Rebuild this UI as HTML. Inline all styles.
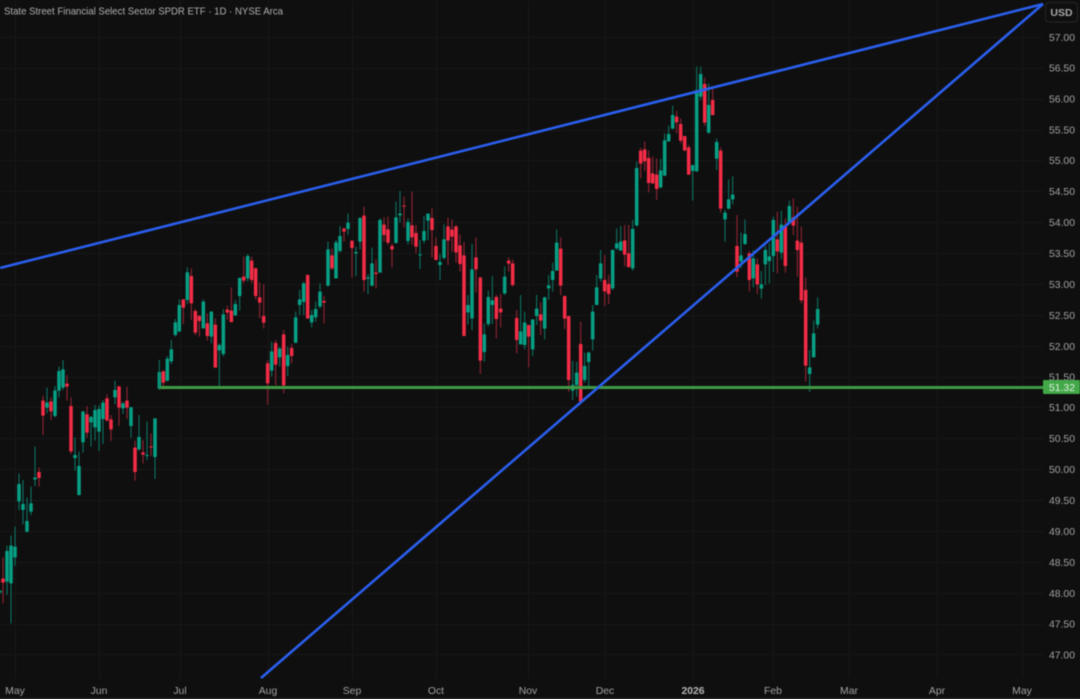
<!DOCTYPE html>
<html lang="en"><head><meta charset="utf-8"><title>Chart</title>
<style>
html,body{margin:0;padding:0;background:#0f0f0f;width:1080px;height:699px;overflow:hidden}
svg{display:block;filter:blur(.45px)}
text{font-family:"Liberation Sans",sans-serif;fill:#a2a2a2}
.w{fill:none;stroke-width:3.2}
.b{fill:none;stroke-width:10.5}
.rw{stroke:#962434}.gw{stroke:#0b7563}.r{stroke:#f42c46}.g{stroke:#07a085}
</style></head><body>
<svg width="1080" height="699" viewBox="0 0 1080 699" xmlns="http://www.w3.org/2000/svg">
<rect width="1080" height="699" fill="#0f0f0f"/>
<g stroke="#171717" stroke-width="1" fill="none">
<path d="M0 37.5H1043M0 68.5H1043M0 99.5H1043M0 130.5H1043M0 160.5H1043M0 191.5H1043M0 222.5H1043M0 253.5H1043M0 284.5H1043M0 315.5H1043M0 346.5H1043M0 377.5H1043M0 407.5H1043M0 438.5H1043M0 469.5H1043M0 500.5H1043M0 531.5H1043M0 562.5H1043M0 593.5H1043M0 624.5H1043M0 654.5H1043"/>
<path d="M15.5 0V678M99.5 0V678M180.5 0V678M268.5 0V678M352.5 0V678M436.5 0V678M528.5 0V678M605.5 0V678M693.5 0V678M773.5 0V678M849.5 0V678M937.5 0V678M1022.5 0V678"/>
</g>

<!-- zoom group 1 -->
<g transform="translate(0,340) scale(.33333)">
<path class="w gw" d="M0 750V762M21 617V765M33 587V850M45 560V678M57 400V510M69 420V553M81 472V578M93 440V525M105 320V438M141 143V220M165 138V232M177 80V172M189 60V150M225 292V392M237 335V466M249 212V338M273 228V320M285 195V302M297 195V333M309 180V312M345 122V193M369 185V222M393 200V293M417 225V332M441 245V360M465 235V417M478 60V150M502 48V125M514 0V72"/>
<path class="w rw" d="M9 652V790M117 382V440M129 167V285M153 172V240M201 105V182M213 172V342M261 198V293M321 163V245M333 225V303M357 138V258M381 140V237M405 302V422M429 300V371M453 280V348M490 90V148"/>
<path class="b g" d="M0 752V758M21 633V725M33 617V730M45 620V652M57 432V484M69 492V510M81 543V575M93 490V515M105 413V418M141 188V203M165 151V228M177 93V152M189 88V143M225 345V354M237 378V465M249 215V307M273 231V247M285 210V262M297 207V275M309 188V237M345 150V172M369 190V205M393 202V258M417 291V328M441 345V348M465 235V351M478 96V146M502 56V122M514 28V64"/>
<path class="b r" d="M9 716V728M117 396V414M129 182V227M153 184V214M201 131V140M213 198V334M261 223V278M321 175V241M333 238V268M357 139V203M381 182V203M405 323V396M429 337V344M453 319V322M490 94V128"/>
</g>

<!-- zoom group 2 -->
<g transform="translate(150,240) scale(.33333)">
<path class="w gw" d="M76 237V290M88 178V275M112 82V192M160 178V265M184 213V310M208 310V440M220 207V350M256 180V228M269 112V212M293 42V125M365 305V410M389 320V380M413 320V408M437 215V310M449 150V225M461 125V225M485 210V262M497 185V245M510 130V205M534 5V140"/>
<path class="w rw" d="M100 178V252M124 85V240M136 207V285M148 225V290M172 220V302M196 235V383M232 197V240M244 142V248M281 50V130M305 50V130M317 82V178M329 127V235M341 132V265M353 360V494M377 300V436M401 270V460M425 312V370M473 103V237M522 168V250"/>
<path class="b g" d="M76 247V285M88 195V275M112 97V180M160 185V265M184 215V290M208 315V331M220 223V342M256 192V226M269 114V168M293 48V115M365 334V392M389 326V352M413 345V378M437 232V308M449 178V195M461 130V186M485 225V247M497 207V232M510 155V200M534 28V137"/>
<path class="b r" d="M100 178V203M124 108V190M136 213V278M148 228V243M172 250V288M196 254V383M232 209V218M244 212V246M281 110V122M305 62V120M317 85V168M329 172V188M341 228V248M353 370V430M377 309V374M401 283V436M425 324V348M473 105V235M522 183V188"/>
</g>

<!-- zoom group 3 -->
<g transform="translate(320,180) scale(.33333)">
<path class="w gw" d="M48 180V295M60 138V218M84 100V165M108 200V288M120 113V208M144 282V342M156 203V320M180 115V278M228 65V190M240 33V128M264 115V193M300 180V267M312 108V190M324 100V180M360 222V300M372 133V238M444 345V433M456 192V450M493 430V545M505 332V440M517 288V432"/>
<path class="w rw" d="M36 205V270M72 143V185M96 182V292M132 80V335M168 238V325M192 112V185M204 110V195M216 190V262M252 50V142M276 35V195M288 135V220M336 85V232M348 172V240M384 113V255M396 118V215M408 135V247M420 163V275M432 186V468M468 172V338M481 290V582M529 345V475"/>
<path class="b g" d="M48 187V295M60 168V213M84 128V147M108 216V220M120 114V185M144 292V296M156 250V317M180 120V278M228 112V189M240 101V106M264 126V183M300 223V226M312 153V182M324 101V122M360 246V255M372 178V234M444 375V397M456 268V415M493 463V516M505 351V432M517 361V375"/>
<path class="b r" d="M36 226V265M72 146V155M96 182V204M132 107V300M168 278V282M192 134V165M204 148V188M216 198V208M252 77V80M276 136V172M288 159V200M336 114V150M348 198V240M384 139V182M396 149V170M408 139V217M420 196V252M432 226V468M468 232V268M481 293V542M529 351V417"/>
</g>

<!-- zoom group 4 -->
<g transform="translate(460,220) scale(.33333)">
<path class="w gw" d="M134 140V225M182 225V373M194 275V388M218 300V408M230 225V315M254 230V358M266 165V240M278 128V215M290 28V152M338 423V540M350 425V530M374 398V488M386 395V500M398 255V392M410 165V255M422 90V185M458 88V210M470 25V90M482 18V90M518 0V152"/>
<path class="w rw" d="M122 222V322M146 112V155M158 118V200M170 270V400M206 315V442M242 247V345M302 52V225M314 228V327M326 288V515M362 305V545M434 105V258M446 165V252M494 15V138M506 15V143"/>
<path class="b g" d="M134 170V220M182 334V373M194 308V375M218 298V388M230 266V288M254 232V326M266 196V205M278 153V180M290 68V152M338 495V512M350 458V495M374 438V480M386 398V426M398 275V358M410 202V255M422 130V176M458 90V205M470 70V85M482 65V92M518 27V145"/>
<path class="b r" d="M122 266V277M146 122V131M158 130V195M170 294V360M206 315V350M242 283V302M302 86V197M314 228V296M326 288V480M362 372V545M434 180V214M446 192V222M494 61V104M506 100V141"/>
</g>

<!-- zoom group 5 -->
<g transform="translate(620,60) scale(.33333)">
<path class="w gw" d="M50 305V500M122 297V385M134 220V348M146 197V245M158 137V208M218 315V422M230 20V335M242 20V120M266 70V222M290 236V330M326 358V448M338 348V433"/>
<path class="w rw" d="M62 263V355M74 245V333M86 272V397M98 290V372M110 295V420M170 153V220M182 175V250M194 228V275M206 255V345M254 53V198M278 85V167M302 262V458"/>
<path class="b g" d="M50 324V496M122 331V382M134 241V347M146 222V244M158 165V206M218 315V333M230 90V334M242 42V110M266 135V218M290 246V296M326 418V446M338 404V418"/>
<path class="b r" d="M62 272V311M74 268V304M86 294V369M98 340V370M110 344V387M170 170V187M182 192V242M194 228V271M206 262V344M254 72V188M278 120V165M302 272V446"/>
</g>

<!-- zoom group 6 -->
<g transform="translate(710,190) scale(.33333)">
<path class="w gw" d="M45 60V155M93 128V235M105 88V165M130 180V292M154 243V326M166 168V285M178 160V280M190 80V246M214 62V208M238 32V105M299 480V606M311 392V502M323 322V415"/>
<path class="w rw" d="M81 75V262M118 183V305M142 205V312M202 65V250M226 85V248M250 25V135M262 50V260M274 110V340M287 262V575"/>
<path class="b g" d="M45 68V88M93 196V214M105 132V162M130 205V265M154 283V296M166 180V223M178 199V213M190 90V198M214 104V188M238 48V100M299 532V552M311 430V502M323 357V404"/>
<path class="b r" d="M81 168V245M118 190V270M142 223V283M202 148V184M226 106V228M250 82V107M262 152V180M274 158V331M287 300V527"/>
</g>

<!-- drawings -->
<path d="M159 387.5H1043" stroke="#3f9a43" stroke-width="3" fill="none"/>
<path d="M159.5 372V388" stroke="#0a8a72" stroke-width="1.5" fill="none"/>
<path d="M0 268L1043 4" stroke="#2a5fef" stroke-width="2.6" fill="none"/>
<path d="M261 678L1043 4" stroke="#2a5fef" stroke-width="2.6" fill="none"/>

<!-- title -->
<text x="4" y="14.5" font-size="10.4" textLength="279" lengthAdjust="spacingAndGlyphs" style="fill:#b0b0b0">State Street Financial Select Sector SPDR ETF · 1D · NYSE Arca</text>

<!-- USD -->
<rect x="1045.5" y="2.5" width="32" height="19.5" rx="3.5" fill="#0f0f0f" stroke="#262626"/>
<text x="1061.5" y="16" font-size="10.5" font-weight="700" text-anchor="middle" style="fill:#a8a8a8">USD</text>

<!-- price axis -->
<g font-size="10.4" text-anchor="middle">
<text x="1062" y="41">57.00</text><text x="1062" y="71.5">56.50</text><text x="1062" y="102.5">56.00</text><text x="1062" y="133.5">55.50</text><text x="1062" y="164">55.00</text><text x="1062" y="195">54.50</text><text x="1062" y="226">54.00</text><text x="1062" y="257">53.50</text><text x="1062" y="288">53.00</text><text x="1062" y="319">52.50</text><text x="1062" y="350">52.00</text><text x="1062" y="380.5">51.50</text><text x="1062" y="411">51.00</text><text x="1062" y="442">50.50</text><text x="1062" y="473">50.00</text><text x="1062" y="504">49.50</text><text x="1062" y="535">49.00</text><text x="1062" y="566">48.50</text><text x="1062" y="597">48.00</text><text x="1062" y="627.5">47.50</text><text x="1062" y="658.5">47.00</text>
</g>
<rect x="1043" y="380" width="37" height="14" rx="1" fill="#43a848"/>
<text x="1062" y="391" font-size="10.4" text-anchor="middle" style="fill:#dff0e0">51.32</text>

<!-- time axis -->
<g font-size="10.4" text-anchor="middle">
<text x="15" y="694">May</text><text x="99" y="694">Jun</text><text x="180" y="694">Jul</text><text x="268" y="694">Aug</text><text x="352" y="694">Sep</text><text x="436" y="694">Oct</text><text x="528" y="694">Nov</text><text x="605" y="694">Dec</text>
<text x="693" y="694" font-weight="700" style="fill:#b5b5b5">2026</text>
<text x="773" y="694">Feb</text><text x="849" y="694">Mar</text><text x="937" y="694">Apr</text><text x="1022" y="694">May</text>
</g>
<rect x="0" y="698" width="1080" height="1" fill="#333"/>
</svg>
</body></html>
